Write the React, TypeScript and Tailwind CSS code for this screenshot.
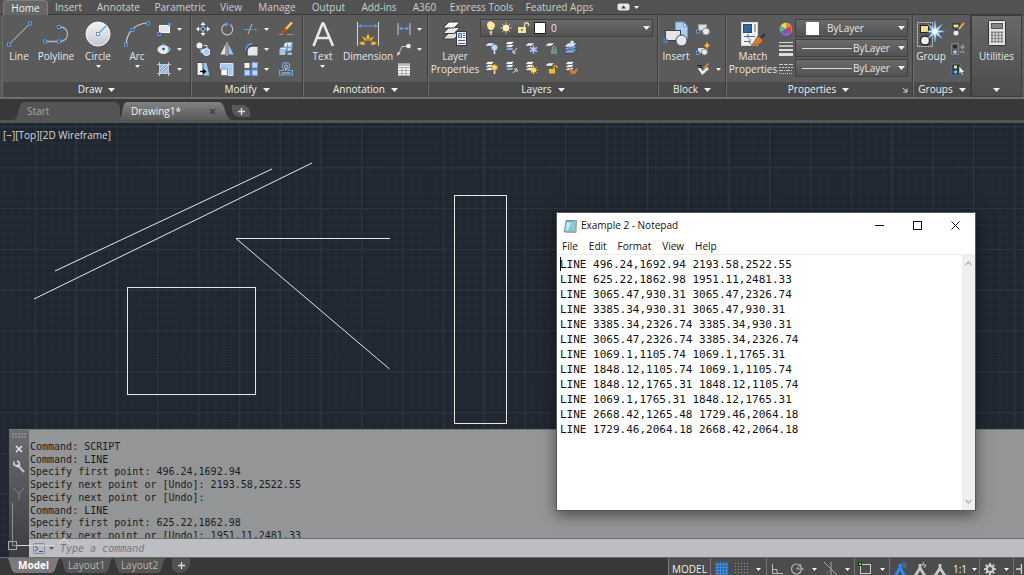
import React from 'react';

type IconProps = { w?: number; h?: number; children: React.ReactNode };

const Icon = ({ w = 14, h = 14, children }: IconProps) => (
  <svg width={w} height={h} viewBox={`0 0 ${w} ${h}`} fill="none" aria-hidden="true" className="block shrink-0">
    {children}
  </svg>
);

const Caret = () => (
  <Icon w={7} h={4}>
    <path d="M0 0h7L3.5 4z" fill="#f0f0f0" />
  </Icon>
);

const SmallCaret = () => (
  <Icon w={5} h={3}>
    <path d="M0 0h5L2.5 3z" fill="#f0f0f0" />
  </Icon>
);

const Grip = ({ x, y }: { x: number; y: number }) => (
  <rect x={x - 1.5} y={y - 1.5} width="3" height="3" fill="#3d4a5c" stroke="#5b9bf5" />
);

// stack of sheets used by every layer command
const Sheets = ({ blue = false }: { blue?: boolean }) => (
  <>
    <path d="M4 7.5h6.500l-3 3H1z" fill={blue ? '#7fb0ee' : '#e8e8e8'} stroke="#333" strokeWidth=".5" />
    <path d="M4 4.500h6.500l-3 3H1z" fill="#e8e8e8" stroke="#333" strokeWidth=".5" />
    <path d="M4 1.500h6.500l-3 3H1z" fill="#fff" stroke="#333" strokeWidth=".5" />
  </>
);

const Sheet = () => <path d="M4 3h6.500l-3 3H1z" fill="#f2f2f2" stroke="#444" strokeWidth=".5" />;

/* ---------- big icons ---------- */

const LineIcon = () => (
  <Icon w={26} h={26}>
    <path d="M3 23.500 24 2.500" stroke="#c9c9c9" />
    <Grip x={3} y={23.5} />
    <Grip x={24} y={2.5} />
  </Icon>
);

const PolylineIcon = () => (
  <Icon w={28} h={26}>
    <path d="M3 20.500h15c10 0 10-14.500 0-14.500" stroke="#b5b5b5" strokeWidth="1.300" />
    <Grip x={3} y={20.5} />
    <Grip x={17} y={20.5} />
    <Grip x={17} y={6} />
  </Icon>
);

const CircleIcon = () => (
  <Icon w={26} h={26}>
    <circle cx="13" cy="13" r="12" fill="url(#disc)" stroke="#f5f5f5" />
    <path d="m13 13 8-8" stroke="#5b9bf5" strokeWidth="1.300" />
    <rect x="11.500" y="11.500" width="3" height="3" fill="#fff" stroke="#5b9bf5" />
    <defs>
      <linearGradient id="disc" x2="0" y2="1">
        <stop stopColor="#f4f4f6" />
        <stop offset="1" stopColor="#c3c6d0" />
      </linearGradient>
    </defs>
  </Icon>
);

const ArcIcon = () => (
  <Icon w={26} h={26}>
    <path d="M2 23.500C3 11 11 2.500 24 2" stroke="#c9c9c9" strokeWidth="1.200" />
    <Grip x={2} y={23.5} />
    <Grip x={8.500} y={9} />
    <Grip x={24} y={2.5} />
  </Icon>
);

const TextIcon = () => (
  <Icon w={24} h={26}>
    <path d="M2.500 25 11.500 2.500h1L22 25M6 17h12.500" stroke="#e9e9e9" strokeWidth="2.600" />
  </Icon>
);

const DimensionIcon = () => (
  <Icon w={24} h={26}>
    <path d="M1.500 1v24M22.500 1v24" stroke="#d5d5d5" />
    <path d="M3 5h18" stroke="#5b9bf5" />
    <path d="m2 5 3-2v4zM22 5l-3-2v4z" fill="#5b9bf5" />
    <path d="m12 13 1.500 3-1.500 4-1.500-4zM6 16l4 1.500v3zM18 16l-4 1.500v3zM3.500 22l4-1.500 1.500 3H5zM20.500 22l-4-1.500-1.500 3H19z" fill="#ffc52e" stroke="#e0a02b" strokeWidth=".5" />
  </Icon>
);

const LayerPropsIcon = () => (
  <Icon w={26} h={26}>
    <path d="M7 12h11l-6 6H1z" fill="#e0e0e0" stroke="#3c3c3c" />
    <path d="M7 6.500h11l-6 6H1z" fill="#ececec" stroke="#3c3c3c" />
    <path d="M7 1h11l-6 6H1z" fill="#fff" stroke="#3c3c3c" />
    <rect x="14.500" y="10.500" width="10" height="14" fill="#eceff3" stroke="#2f3640" />
    <rect x="16.500" y="12.500" width="3" height="4" fill="#9fc3f3" stroke="#4a7dbd" />
    <path d="M21 12.500h2M21 14.500h2M21 16.500h2M16 19.500h7M16 22.500h7" stroke="#5a6470" />
  </Icon>
);

const InsertIcon = () => (
  <Icon w={26} h={26}>
    <path d="M12.500 1h8l4 4.500V18h-12z" fill="#a9cdf5" stroke="#7399c4" />
    <path d="M20.500 1v4.500h4z" fill="#e4f0ff" stroke="#7399c4" />
    <rect x="2.500" y="9.500" width="15" height="10" fill="#e5e6ea" stroke="#3c4048" />
    <circle cx="18.500" cy="19.500" r="5.500" fill="#e5e7ec" stroke="#3c4048" />
    <Grip x={2.500} y={19.5} />
  </Icon>
);

const MatchIcon = () => (
  <Icon w={26} h={26}>
    <rect x="1.500" y="1.500" width="16" height="23" fill="#f0f1f3" stroke="#d8d8d8" />
    <rect x="3.500" y="3.500" width="8" height="8" fill="#34679b" stroke="#234f7c" />
    <path d="M14 4h2M14 6h2M14 8h2M14 10h2M4 15.500h11M8 13v4.500M4 20.500h6M10 18v5" stroke="#5c6670" />
    <path d="m25 13-4 4" stroke="#3c2a20" strokeWidth="2.200" />
    <path d="m18 15 5 4c-1 4-5 6-12 5 4-2 4-6 7-9z" fill="#cf7f35" stroke="#7b3f12" strokeWidth=".7" />
  </Icon>
);

const GroupIcon = () => (
  <Icon w={28} h={28}>
    <rect x=".5" y="2.500" width="15" height="24" stroke="#d0d0d0" strokeDasharray="2 1" />
    <rect x="3.500" y="5.500" width="8" height="7" fill="#f0df86" stroke="#262626" />
    <circle cx="8" cy="20.500" r="4.500" fill="#e9f2fb" stroke="#262626" strokeWidth="1.300" />
    <path d="m18 1 1.300 7.500L25 4.500l-4 5.700 6.500 1.300-6.500 1.300 4 5.700-5.700-4L18 22l-1.300-7.500-5.700 4 4-5.700-6.500-1.300 6.500-1.300-4-5.700 5.700 4z" fill="#c5e4ff" stroke="#6fb3f3" strokeWidth=".5" />
    <circle cx="18" cy="11.500" r="2.500" fill="#fff" />
  </Icon>
);

const CalculatorIcon = () => (
  <Icon w={18} h={26}>
    <rect x=".5" y=".5" width="17" height="25" rx="1" fill="#e3e3e3" stroke="#333" />
    <rect x="3.500" y="3.500" width="11" height="5" fill="#7f858c" stroke="#555" />
    <path d="M3 12.500h12M3 15.500h12M3 18.500h12M3 21.500h12" stroke="#666" strokeWidth="2" strokeDasharray="2.200 1" />
  </Icon>
);

/* ---------- small icons ---------- */

const RectIcon = () => (
  <Icon>
    <rect x="2.500" y="3.500" width="10" height="7" fill="#e5e6ea" stroke="#f7f7f7" />
    <Grip x={1.800} y={12} />
    <circle cx="12.500" cy="2.500" r="1.700" fill="#5b9bf5" />
  </Icon>
);
const EllipseIcon = () => (
  <Icon>
    <ellipse cx="6.500" cy="7.500" rx="5.500" ry="4" fill="#dfe6f0" stroke="#f4f4f4" />
    <circle cx="6.500" cy="7" r="1.200" fill="#27394f" />
    <circle cx="6.500" cy="2.500" r="1.300" fill="#5b9bf5" />
    <circle cx="12.500" cy="7" r="1.500" fill="#5b9bf5" />
  </Icon>
);
const HatchIcon = () => (
  <Icon>
    <rect x="2.500" y="2.500" width="9" height="9" fill="#8fb0e4" />
    <path d="m3 7 4-4M3 11l8-8M7 11l4-4" stroke="#cfe0fa" />
    <path d="M0 2.500h14M0 11.500h14M2.500 0v14M11.500 0v14" stroke="#cacaca" />
  </Icon>
);
const MoveIcon = () => (
  <Icon>
    <path d="M7 0 4.500 3h5zM7 14l-2.500-3h5zM0 7l3-2.500v5zM14 7l-3-2.500v5z" fill="#f2f2f2" />
    <path d="M7 3v8M3 7h8" stroke="#d5d5d5" />
    <Grip x={7} y={7} />
  </Icon>
);
const RotateIcon = () => (
  <Icon>
    <path d="M5 2.300a5.500 5.500 0 1 0 5 .3" stroke="#c0c0c0" strokeWidth="1.200" />
    <path d="m5 0 4 2-4 3z" fill="#5b9bf5" />
  </Icon>
);
const TrimIcon = () => (
  <Icon>
    <path d="M0 7.500h5" stroke="#5b9bf5" />
    <path d="M7 7.500h7" stroke="#5b9bf5" strokeDasharray="2 1" />
    <path d="M8 2 4 12" stroke="#bbb" />
  </Icon>
);
const EraseIcon = () => (
  <Icon>
    <path d="M13 .500 6 8" stroke="#f7c75d" strokeWidth="2.500" />
    <path d="M7 6.500c-3 .5-5 2-5.500 5.500 3.500 0 5.500-1 6.500-3.500z" fill="#c3451f" />
    <path d="M0 12.500h4M8 12.500h6" stroke="#9a9a9a" />
  </Icon>
);
const CopyIcon = () => (
  <Icon>
    <circle cx="3.500" cy="3.500" r="3" fill="#efefef" />
    <circle cx="6.500" cy="9" r="2.200" fill="#b7d3f8" />
    <circle cx="10.500" cy="10" r="3.500" fill="#a9c9f5" stroke="#e5effd" />
    <path d="M8 3.500h3v3" stroke="#ddd" />
  </Icon>
);
const MirrorIcon = () => (
  <Icon>
    <path d="M5.500 2v10.500H.5z" fill="#e3e3e3" />
    <path d="M8.500 2v10.500h5z" fill="#9cc3f4" />
    <path d="M7 0v14" stroke="#c7d8ee" />
  </Icon>
);
const FilletIcon = () => (
  <Icon>
    <path d="M3 13.500V10c0-4 3-6 6-6h4.500v9.500z" fill="#e6e6e9" />
    <path d="M1.500 8.500c.5-4 3-6.500 7-7" stroke="#5b9bf5" strokeWidth="1.300" />
    <path d="M3 14V10c0-4 3-6 6-6h5" stroke="#222" />
  </Icon>
);
const ExplodeIcon = () => (
  <Icon>
    <path d="M4.500 3 7 .500h6.500L12 3z" fill="#e9f3fe" />
    <path d="M12 3 13.500.500v6L12 9z" fill="#7fa9dc" />
    <path d="M5 3h7v6H5z" fill="#b5d2f4" />
    <path d="M.5 7.500 2 5.500h5.500L6 7.500z" fill="#e9f3fe" />
    <path d="M.5 7.500H6v5.500H.5z" fill="#a5c7ef" />
    <path d="m6 7.500 1.500-2v5L6 13z" fill="#6d97cc" />
    <path d="M8.500 10.500h4.500V13H8.500z" fill="#9cc0ea" />
    <path d="M8.500 1v8M5 5.500h7" stroke="#54789f" strokeWidth=".6" />
  </Icon>
);
const StretchIcon = () => (
  <Icon>
    <path d="M1 .500h6v13H1z" fill="#f4f4f4" stroke="#444" />
    <path d="M7.500 1h3l3 12.500h-6z" fill="#9cc3f4" />
    <path d="M4 9.500h4" stroke="#111" strokeWidth="1.300" />
    <path d="m7 6.500 3.500 3-3.500 3z" fill="#111" />
  </Icon>
);
const ScaleIcon = () => (
  <Icon>
    <path d="M.5 1.500h12.500v12H8V7H.5z" fill="#a9c9f5" stroke="#d7e5f8" />
    <rect x="1" y="7" width="6.500" height="6.500" fill="#f4f4f4" stroke="#555" strokeWidth=".6" />
  </Icon>
);
const ArrayIcon = () => (
  <Icon>
    <rect x=".5" y="1" width="5" height="5" fill="#f4f4f4" />
    <rect x="8" y=".5" width="5.500" height="5.500" fill="#bcd6f9" stroke="#5b9bf5" />
    <rect x=".5" y="8" width="5.500" height="5.500" fill="#bcd6f9" stroke="#5b9bf5" />
    <rect x="8" y="8" width="5.500" height="5.500" fill="#bcd6f9" stroke="#5b9bf5" />
  </Icon>
);
const OffsetIcon = () => (
  <Icon>
    <path d="M.5 13V8.500H4.500V7C2 3.500 4 .700 7 .700S12 3.500 9.500 7v1.500h4V13z" stroke="#6fa3f0" strokeWidth="1.200" />
    <path d="M2.500 11h9M6.500 8.500V6.500C5 5 5.500 3 7 3s2 2 .8 3.500v2" stroke="#c9d3e2" />
  </Icon>
);
const LinearDimIcon = () => (
  <Icon>
    <path d="M1 1v12M13 1v12" stroke="#ccc" />
    <path d="M2 6.500h10" stroke="#5b9bf5" />
    <path d="m2 6.500 3-2v4zM12 6.500l-3-2v4z" fill="#5b9bf5" />
  </Icon>
);
const LeaderIcon = () => (
  <Icon>
    <path d="M1.500 12 5 4.500h5" stroke="#ccc" />
    <path d="m0 14 .5-4 3 1.500z" fill="#ddd" />
    <circle cx="11.500" cy="4" r="2.300" fill="#eee" />
  </Icon>
);
const TableIcon = () => (
  <Icon>
    <rect x="1" y="1.500" width="12" height="12" fill="#f6f6f6" />
    <path d="M1 3h12" stroke="#bdbdbd" strokeWidth="2" />
    <path d="M1 5.500h12M1 8.500h12M1 11.500h12M5 5v8M9 5v8" stroke="#9a9a9a" strokeWidth=".8" />
  </Icon>
);
const LayerOffIcon = () => (
  <Icon>
    <Sheet />
    <circle cx="10.500" cy="7.500" r="3" fill="#b9dcff" stroke="#6ba5e8" strokeWidth=".6" />
    <path d="M10.500 10.500V14" stroke="#eee" strokeWidth="1.500" />
  </Icon>
);
const LayerIsolateIcon = () => (
  <Icon>
    <Sheets blue />
    <path d="m13 8-4 5M9 10v3h3" stroke="#ddd" />
  </Icon>
);
const LayerFreezeIcon = () => (
  <Icon>
    <Sheet />
    <path d="M9.500 5.500v8M6 7.500l7 4M13 7.500l-7 4" stroke="#a9cdfb" strokeWidth="1.500" />
  </Icon>
);
const LayerLockIcon = () => (
  <Icon>
    <Sheet />
    <rect x="7" y="9" width="6" height="5" fill="#6e9088" />
    <path d="M8.500 9V7q1.500-2 3 0v2" stroke="#8fb0a8" />
  </Icon>
);
const LayerCurrentIcon = () => (
  <Icon>
    <path d="M4 9h9l-4 4H0zM4 6h9l-4 4H0z" fill="#7fb0ee" stroke="#333" strokeWidth=".5" />
    <path d="M4 3h9L9 7H0z" fill="#dbe9fa" stroke="#333" strokeWidth=".5" />
    <circle cx="8" cy="2.500" r="2" fill="#c7d6e8" />
  </Icon>
);
const LayerOnIcon = () => (
  <Icon>
    <Sheets />
    <circle cx="10.500" cy="7.500" r="2.800" fill="#ffd877" stroke="#e58b1c" />
    <path d="M10.500 10.500V14" stroke="#eee" strokeWidth="1.500" />
  </Icon>
);
const LayerUnisolateIcon = () => (
  <Icon>
    <Sheets blue />
    <path d="m9 13 4-4M10 9h3v3" stroke="#ddd" />
  </Icon>
);
const LayerThawIcon = () => (
  <Icon>
    <Sheets />
    <circle cx="9.500" cy="10" r="2.500" fill="#ffe25a" />
    <path d="M9.500 6v8M5.500 10h8M7 7.200l5.500 5.600M12.500 7.200 7 12.800" stroke="#ffd633" />
  </Icon>
);
const LayerUnlockIcon = () => (
  <Icon>
    <Sheet />
    <rect x="5" y="9" width="6" height="4.500" fill="#f5b921" />
    <path d="M10 9V6.500q1.500-2 3 0V8" stroke="#f5b921" strokeWidth="1.200" />
  </Icon>
);
const LayerMatchIcon = () => (
  <Icon>
    <Sheets />
    <path d="m6 9 4 3 3.500-3.500L11 13l-3 1z" fill="#cf7f35" stroke="#cf7f35" strokeWidth="1.500" />
  </Icon>
);
const CreateBlockIcon = () => (
  <Icon>
    <rect x="2.500" y="2.500" width="8" height="6" fill="#dcdde2" stroke="#999" />
    <circle cx="10" cy="9.500" r="3.500" fill="#e9e9ee" stroke="#888" />
    <Grip x={2} y={9.5} />
  </Icon>
);
const EditBlockIcon = () => (
  <Icon>
    <path d="M2 6h6v5H2z" fill="#dcdde2" />
    <circle cx="8.500" cy="10" r="3" fill="#e9e9ee" stroke="#888" />
    <path d="m11 0 1 2.500 2 1-2 1-1 2.500-1-2.500-2-1 2-1z" fill="#ffc52e" stroke="#e58b1c" strokeWidth=".5" />
    <Grip x={1.800} y={11} />
  </Icon>
);
const AttributesIcon = () => (
  <Icon>
    <path d="m3 6 3.500 5L12 6" stroke="#eee" strokeWidth="2.600" />
    <path d="M1 3.500h5M3 5.500h3" stroke="#222" />
    <path d="m12.500 1.500-5 5.500" stroke="#f08c34" strokeWidth="1.500" />
  </Icon>
);
const ColorWheelIcon = () => (
  <Icon>
    <path d="M7 7V1a6 6 0 0 1 5.200 3z" fill="#e98a3c" />
    <path d="m7 7 5.200-3a6 6 0 0 1 0 6z" fill="#e2452f" />
    <path d="m7 7 5.200 3A6 6 0 0 1 7 13z" fill="#b03bc6" />
    <path d="M7 7v6a6 6 0 0 1-5.200-3z" fill="#4468dd" />
    <path d="M7 7 1.800 10a6 6 0 0 1 0-6z" fill="#4fbf6a" />
    <path d="M7 7 1.800 4A6 6 0 0 1 7 1z" fill="#e8dc5a" />
    <circle cx="7" cy="7" r="6" stroke="#ddd" strokeWidth=".4" />
  </Icon>
);
const LineweightIcon = () => (
  <Icon>
    <path d="M0 .500h14" stroke="#ddd" />
    <path d="M0 4h14" stroke="#ddd" strokeWidth="1.500" />
    <path d="M0 8h14" stroke="#ddd" strokeWidth="2" />
    <path d="M0 12.500h14" stroke="#ddd" strokeWidth="3" />
  </Icon>
);
const LinetypeIcon = () => (
  <Icon>
    <path d="M0 2.500h14" stroke="#ccc" strokeDasharray="4 1" />
    <path d="M0 5.500h14" stroke="#ccc" strokeDasharray="2 1" />
    <path d="M0 8.500h14" stroke="#ccc" strokeDasharray="4 1 1 1" />
    <path d="M0 11.500h14" stroke="#ccc" strokeDasharray="1 1" />
  </Icon>
);
const UngroupIcon = () => (
  <Icon>
    <rect x="2" y="2" width="6" height="4" fill="#f0df86" stroke="#222" />
    <circle cx="5" cy="11" r="2.500" fill="#dfefff" />
    <path d="m13 1-5 6" stroke="#f4c04b" strokeWidth="1.600" />
    <path d="M5 7v2" stroke="#222" />
  </Icon>
);
const GroupEditIcon = () => (
  <Icon>
    <rect x=".5" y="1.500" width="7" height="11" stroke="#aaa" strokeDasharray="1 1" />
    <rect x="2.500" y="3" width="3" height="3" fill="#222" />
    <circle cx="4" cy="10" r="1.800" fill="#a9cdfb" />
    <path d="M9 5h5M11.500 2.500v5M9 10h5" stroke="#aaa" />
  </Icon>
);
const GroupSelectIcon = () => (
  <Icon>
    <rect x="1" y="2" width="8" height="11" fill="#2c3542" stroke="#4d8be0" strokeDasharray="1 1" />
    <rect x="3" y="3.500" width="3" height="3" fill="#f0df86" />
    <circle cx="4.500" cy="10" r="1.800" fill="#7fb0ee" />
    <path d="M8 4v8l2-1.500 1.500 3 1.200-.7L11.500 10H14z" fill="#f4e7c6" stroke="#333" strokeWidth=".5" />
  </Icon>
);

/* ---------- ribbon ---------- */

const ribbonTabs = [
  { name: 'Home', width: 'w-[45px]' },
  { name: 'Insert', width: 'w-[41px]' },
  { name: 'Annotate', width: 'w-[59px]' },
  { name: 'Parametric', width: 'w-[64px]' },
  { name: 'View', width: 'w-[38px]' },
  { name: 'Manage', width: 'w-[54px]' },
  { name: 'Output', width: 'w-[49px]' },
  { name: 'Add-ins', width: 'w-[52px]' },
  { name: 'A360', width: 'w-[39px]' },
  { name: 'Express Tools', width: 'w-[75px]' },
  { name: 'Featured Apps', width: 'w-[81px]' },
];

const RibbonTabs = () => (
  <nav className="flex h-[15px] shrink-0 border-b border-[#3b3b3b] bg-[#525252] pl-[3px]">
    {ribbonTabs.map((tab, index) => (
      <button
        key={tab.name}
        className={`${tab.width} h-[15px] whitespace-nowrap leading-[13px] ${
          index === 0 ? 'rounded-t-sm border border-b-0 border-[#7d7d7d] bg-[#666] text-[#f0f0f0]' : 'text-[#cfcfcf]'
        }`}
      >
        {tab.name}
      </button>
    ))}
    <button aria-label="Minimize ribbon" className="ml-[17px] flex items-center gap-1">
      <Icon w={13} h={8}>
        <rect x=".5" y=".5" width="12" height="7" rx="2" fill="#e6e6e6" />
        <path d="M4 5.500h5L6.500 2.500z" fill="#444" />
      </Icon>
      <SmallCaret />
    </button>
  </nav>
);

type PanelProps = { title?: string; width: string; launcher?: boolean; children: React.ReactNode };

const Panel = ({ title, width, launcher, children }: PanelProps) => (
  <section className={`${width} flex shrink-0 flex-col border-l border-r border-l-[#6b6b6b] border-r-[#3d3d3d]`}>
    <div className="flex h-[67px] pl-[2px] pr-1">{children}</div>
    <button className="flex h-[15px] items-center justify-center gap-[6px] bg-[#4a4a4a] text-[#f0f0f0]">
      {launcher && <span className="ml-auto w-2" />}
      {title}
      <Caret />
      {launcher && (
        <span className="ml-auto pr-1">
          <Icon w={6} h={6}>
            <path d="M1 1l4 4M5 1.500V5H1.500" stroke="#ddd" />
          </Icon>
        </span>
      )}
    </button>
  </section>
);

type BigProps = { icon: React.ReactNode; label: string; width: string; menu?: boolean };

const BigButton = ({ icon, label, width, menu }: BigProps) => (
  <button className={`${width} flex h-full shrink-0 flex-col items-center pt-[6px] leading-[13px] text-[#e8e8e8]`}>
    <span className="mb-[3px] flex h-[26px] items-center">{icon}</span>
    <span>{label}</span>
    {menu && (
      <span className="mt-[2px]">
        <SmallCaret />
      </span>
    )}
  </button>
);

type Tool = { label: string; icon: React.ReactNode; menu?: boolean };

const ToolColumn = ({ tools }: { tools: Tool[] }) => (
  <div className="flex shrink-0 flex-col pt-1">
    {tools.map((tool) => (
      <button key={tool.label} aria-label={tool.label} className="flex h-5 items-center gap-[6px]">
        {tool.icon}
        {tool.menu && <SmallCaret />}
      </button>
    ))}
  </div>
);

const Combo = ({ label, value, pad, children }: { label: string; value: string; pad: string; children?: React.ReactNode }) => (
  <div className="relative h-[18px] w-full border border-[#404040] bg-linear-to-b from-[#6a6a6a] to-[#525252]">
    <select aria-label={label} className={`${pad} h-4 w-full appearance-none bg-transparent leading-4 text-[#e8e8e8] outline-none`}>
      <option>{value}</option>
    </select>
    <div className="pointer-events-none absolute inset-0 flex items-center pl-[6px] pr-[2px]">
      {children}
      <span className="ml-auto">
        <Caret />
      </span>
    </div>
  </div>
);

const layerTools: Tool[] = [
  { label: 'Off', icon: <LayerOffIcon /> },
  { label: 'Isolate', icon: <LayerIsolateIcon /> },
  { label: 'Freeze', icon: <LayerFreezeIcon /> },
  { label: 'Lock', icon: <LayerLockIcon /> },
  { label: 'Make current', icon: <LayerCurrentIcon /> },
  { label: 'Turn all on', icon: <LayerOnIcon /> },
  { label: 'Unisolate', icon: <LayerUnisolateIcon /> },
  { label: 'Thaw all', icon: <LayerThawIcon /> },
  { label: 'Unlock', icon: <LayerUnlockIcon /> },
  { label: 'Match layer', icon: <LayerMatchIcon /> },
];

const Ribbon = () => (
  <div className="flex h-[84px] shrink-0 border-b-2 border-[#6e6e6e] bg-[#5b5b5b] pl-[2px]">
    <Panel title="Draw" width="w-[189px]">
      <BigButton icon={<LineIcon />} label="Line" width="w-[28px]" />
      <BigButton icon={<PolylineIcon />} label="Polyline" width="w-[46px]" />
      <BigButton icon={<CircleIcon />} label="Circle" width="w-[38px]" menu />
      <BigButton icon={<ArcIcon />} label="Arc" width="w-[40px]" menu />
      <ToolColumn
        tools={[
          { label: 'Rectangle', icon: <RectIcon />, menu: true },
          { label: 'Ellipse', icon: <EllipseIcon />, menu: true },
          { label: 'Hatch', icon: <HatchIcon />, menu: true },
        ]}
      />
    </Panel>
    <Panel title="Modify" width="w-[112px]">
      <div className="flex gap-[10px] pl-[2px]">
        <ToolColumn
          tools={[
            { label: 'Move', icon: <MoveIcon /> },
            { label: 'Copy', icon: <CopyIcon /> },
            { label: 'Stretch', icon: <StretchIcon /> },
          ]}
        />
        <ToolColumn
          tools={[
            { label: 'Rotate', icon: <RotateIcon /> },
            { label: 'Mirror', icon: <MirrorIcon /> },
            { label: 'Scale', icon: <ScaleIcon /> },
          ]}
        />
        <ToolColumn
          tools={[
            { label: 'Trim', icon: <TrimIcon />, menu: true },
            { label: 'Fillet', icon: <FilletIcon />, menu: true },
            { label: 'Array', icon: <ArrayIcon />, menu: true },
          ]}
        />
        <ToolColumn
          tools={[
            { label: 'Erase', icon: <EraseIcon /> },
            { label: 'Explode', icon: <ExplodeIcon /> },
            { label: 'Offset', icon: <OffsetIcon /> },
          ]}
        />
      </div>
    </Panel>
    <Panel title="Annotation" width="w-[125px]">
      <BigButton icon={<TextIcon />} label="Text" width="w-[33px]" menu />
      <BigButton icon={<DimensionIcon />} label="Dimension" width="w-[58px]" />
      <ToolColumn
        tools={[
          { label: 'Linear', icon: <LinearDimIcon />, menu: true },
          { label: 'Leader', icon: <LeaderIcon />, menu: true },
          { label: 'Table', icon: <TableIcon /> },
        ]}
      />
    </Panel>
    <Panel title="Layers" width="w-[230px]">
      <BigButton icon={<LayerPropsIcon />} label="Layer Properties" width="w-[48px]" />
      <div className="ml-px flex flex-1 flex-col pt-[4px]">
        <Combo label="Layer" value="0" pad="pl-[70px]">
          <span className="flex items-center gap-[4px]">
            <Icon w={8} h={14}>
              <path d="M2.500 9C-3 3 2-.5 4 .500S11 3 5.500 9z" fill="#fbe9a0" />
              <path d="M2.500 11h3M3 13h2" stroke="#ddd" strokeWidth="1.500" />
            </Icon>
            <Icon w={14} h={14}>
              <path d="M7 1v12M1 7h12M3 3l8 8M11 3l-8 8" stroke="#d0cba8" strokeWidth=".8" />
              <circle cx="7" cy="7" r="3.200" fill="#fff0b0" />
            </Icon>
            <Icon w={13} h={14}>
              <rect x="1" y="6" width="8" height="6" fill="#f2e3a0" />
              <path d="M7.500 6V3q2-2.500 4 0v2" stroke="#eadb9b" strokeWidth="1.300" />
              <path d="M5 8v2" stroke="#333" />
            </Icon>
            <span className="size-3 border border-[#222] bg-white" />
          </span>
        </Combo>
        <div className="grid grid-cols-[repeat(5,20px)] pl-px">
          {layerTools.map((tool) => (
            <button key={tool.label} aria-label={tool.label} className="flex h-5 items-center justify-center">
              {tool.icon}
            </button>
          ))}
        </div>
      </div>
    </Panel>
    <Panel title="Block" width="w-[68px]">
      <BigButton icon={<InsertIcon />} label="Insert" width="w-[30px]" />
      <div className="ml-[5px]">
        <ToolColumn
          tools={[
            { label: 'Create', icon: <CreateBlockIcon /> },
            { label: 'Edit', icon: <EditBlockIcon /> },
            { label: 'Edit attributes', icon: <AttributesIcon />, menu: true },
          ]}
        />
      </div>
    </Panel>
    <Panel title="Properties" width="w-[187px]" launcher>
      <BigButton icon={<MatchIcon />} label="Match Properties" width="w-[48px]" />
      <div className="ml-[2px]">
        <ToolColumn
          tools={[
            { label: 'Color', icon: <ColorWheelIcon /> },
            { label: 'Lineweight', icon: <LineweightIcon /> },
            { label: 'Linetype', icon: <LinetypeIcon /> },
          ]}
        />
      </div>
      <div className="ml-[2px] flex flex-1 flex-col gap-[2px] pt-1">
        <Combo label="Object color" value="ByLayer" pad="pl-[31px]">
          <span className="ml-1 size-[13px] bg-white" />
        </Combo>
        <Combo label="Object lineweight" value="ByLayer" pad="pl-[57px]">
          <span className="h-px w-[50px] bg-[#d8d8d8]" />
        </Combo>
        <Combo label="Object linetype" value="ByLayer" pad="pl-[57px]">
          <span className="h-px w-[50px] bg-[#d8d8d8]" />
        </Combo>
      </div>
    </Panel>
    <Panel title="Groups" width="w-[58px]">
      <BigButton icon={<GroupIcon />} label="Group" width="w-[30px]" />
      <div className="ml-[5px]">
        <ToolColumn
          tools={[
            { label: 'Ungroup', icon: <UngroupIcon /> },
            { label: 'Group edit', icon: <GroupEditIcon /> },
            { label: 'Group selection', icon: <GroupSelectIcon /> },
          ]}
        />
      </div>
    </Panel>
    <button className="flex w-[51px] shrink-0 flex-col items-center border border-[#3d3d3d] bg-linear-to-b from-[#686868] to-[#4c4c4c] pt-1 leading-[13px] text-[#e8e8e8]">
      <CalculatorIcon />
      <span className="mt-1">Utilities</span>
      <span className="mt-auto pb-1">
        <Caret />
      </span>
    </button>
  </div>
);

/* ---------- file tabs ---------- */

const FileTabs = () => (
  <div className="flex h-[24px] shrink-0 items-end border-b-[3px] border-[#555] bg-[#383838] pl-[14px]">
    <button className="relative h-[18px] w-[106px] text-left text-[#a8a8a8]">
      <svg viewBox="0 0 106 18" className="absolute inset-0 size-full" aria-hidden="true">
        <path d="M0 18C5 16 4 0 10 0h90q4 0 6 5v13z" fill="#545454" />
      </svg>
      <span className="relative pl-[13px]">Start</span>
    </button>
    <button className="relative flex h-[18px] w-[112px] items-center justify-between pl-[11px] pr-[16px] text-[#f2f2f2]">
      <svg viewBox="0 0 112 18" className="absolute inset-0 size-full" aria-hidden="true">
        <defs>
          <linearGradient id="tab" x2="0" y2="1">
            <stop stopColor="#828282" />
            <stop offset="1" stopColor="#5a5a5a" />
          </linearGradient>
        </defs>
        <path d="M-2 18C4 16 1 0 7 0h92c7 0 5 16 13 18z" fill="url(#tab)" />
      </svg>
      <span className="relative">Drawing1*</span>
      <span className="relative">
        <Icon w={7} h={7}>
          <path d="m1 1 5 5M6 1 1 6" stroke="#3c3c3c" strokeWidth="1.300" />
        </Icon>
      </span>
    </button>
    <button aria-label="New drawing" className="mb-[3px] flex h-[12px] w-[18px] items-center justify-center rounded-tr-lg rounded-bl-lg bg-[#595959]">
      <Icon w={7} h={7}>
        <path d="M3.500 0v7M0 3.500h7" stroke="#e0e0e0" strokeWidth="1.400" />
      </Icon>
    </button>
  </div>
);

/* ---------- drawing area ---------- */

const Drawing = () => (
  <svg className="absolute inset-0 size-full" aria-hidden="true">
    <defs>
      <pattern id="minor" x="34.900" y="3.500" width="8.160" height="8.160" patternUnits="userSpaceOnUse">
        <path d="M.5 0v8.160M0 .500h8.160" stroke="#262d38" />
      </pattern>
      <pattern id="major" x="34.900" y="3.500" width="40.800" height="40.800" patternUnits="userSpaceOnUse">
        <path d="M.5 0v40.800M0 .500h40.800" stroke="#2d3645" />
      </pattern>
    </defs>
    <rect width="100%" height="100%" fill="url(#minor)" />
    <rect width="100%" height="100%" fill="url(#major)" />
    <g stroke="#e6e6e6" fill="none">
      <path d="M34 176 312 40M55 148l217-102" />
      <path d="M390 115.500H236L389.500 246" />
      <rect x="127.500" y="164.500" width="128" height="107" />
      <rect x="454.500" y="72.500" width="52" height="228" />
    </g>
  </svg>
);

const history = [
  'Command: SCRIPT',
  'Command: LINE',
  'Specify first point: 496.24,1692.94',
  'Specify next point or [Undo]: 2193.58,2522.55',
  'Specify next point or [Undo]:',
  'Command: LINE',
  'Specify first point: 625.22,1862.98',
  'Specify next point or [Undo]: 1951.11,2481.33',
];

const CommandWindow = () => (
  <div className="absolute bottom-0 left-[9px] right-0 flex h-[128px] border-t border-[#777] font-['DejaVu_Sans_Mono',monospace]">
    <div className="flex w-5 shrink-0 flex-col items-center gap-[7px] bg-linear-to-b from-[#6b6d70] to-[#3a3c40] pt-[3px]">
      <Icon w={15} h={5}>
        <path d="M0 1h15M0 4h15" stroke="#a5a7a9" strokeDasharray="2 1" />
      </Icon>
      <button aria-label="Close">
        <Icon w={8} h={8}>
          <path d="m1 1 6 6M7 1 1 7" stroke="#e3e3e3" strokeWidth="1.700" />
        </Icon>
      </button>
      <button aria-label="Customize">
        <Icon w={12} h={13}>
          <path d="m4 4.500 7 7.500" stroke="#b9c1cc" strokeWidth="2.400" />
          <path d="M1 1.500v3l3 2 2.500-1.500L6 2 4 1" stroke="#d5dae0" strokeWidth="1.500" />
        </Icon>
      </button>
    </div>
    <div className="flex min-w-0 flex-1 flex-col">
      <div className="flex h-[108px] flex-col overflow-hidden bg-[#9a9b9d]/95 pl-px pt-[11px] text-[#1c1c1c]">
        <div className="flex h-[101px] shrink-0 flex-col justify-between">
          {history.map((line, index) => (
            <p key={index} className="whitespace-pre leading-[12px]">{line}</p>
          ))}
        </div>
      </div>
      <div className="flex h-[19px] items-center border-t border-[#6c6d70] bg-[#c1c2c5]/98 pl-1">
        <button aria-label="Recent commands" className="flex items-center gap-1">
          <Icon w={12} h={11}>
            <rect x=".5" y=".5" width="11" height="10" rx="1" fill="#b3bdca" stroke="#7f8a99" />
            <path d="m2 3 3 2.500L2 8M6 8.500h4" stroke="#46505e" />
          </Icon>
          <Icon w={5} h={3}>
            <path d="M0 0h5L2.500 3z" fill="#555" />
          </Icon>
        </button>
        <input
          aria-label="Command"
          placeholder="Type a command"
          className="ml-[6px] h-4 min-w-0 flex-1 bg-transparent italic outline-none placeholder:text-[#77787b]"
        />
      </div>
    </div>
  </div>
);

// axis marker, drawn on top of the command window
const UcsMarker = () => (
  <svg width="64" height="76" viewBox="0 0 64 76" fill="none" className="pointer-events-none absolute bottom-0 left-[8px]" aria-hidden="true">
    <path d="M4.500 22v38" stroke="#8e9194" />
    <rect x=".5" y="60.500" width="8" height="8" stroke="#a8abae" />
    <path d="M8 64.500h39" stroke="#d5d6d8" />
    <path d="M4.500 60v4.500H9" stroke="#8e9194" />
    <path d="m51 63 5-6 5 6" stroke="#dcdddf" />
    <path d="m6 7 5 6 5-6M11 13v6" stroke="#85878a" />
  </svg>
);

const scriptText = `LINE 496.24,1692.94 2193.58,2522.55
LINE 625.22,1862.98 1951.11,2481.33
LINE 3065.47,930.31 3065.47,2326.74
LINE 3385.34,930.31 3065.47,930.31
LINE 3385.34,2326.74 3385.34,930.31
LINE 3065.47,2326.74 3385.34,2326.74
LINE 1069.1,1105.74 1069.1,1765.31
LINE 1848.12,1105.74 1069.1,1105.74
LINE 1848.12,1765.31 1848.12,1105.74
LINE 1069.1,1765.31 1848.12,1765.31
LINE 2668.42,1265.48 1729.46,2064.18
LINE 1729.46,2064.18 2668.42,2064.18`;

const Notepad = () => (
  <div className="absolute left-[556px] top-[89px] flex h-[299px] w-[420px] flex-col border border-[#55585c] bg-white text-[#111] shadow-[0_4px_14px_rgba(0,0,0,0.5)]">
    <div className="flex h-[25px] shrink-0 items-center pl-[6px] pr-[15px]">
      <Icon w={14} h={14}>
        <path d="M3 1.500h10.500L12 13H1z" fill="#8cc9d6" stroke="#6a8f98" strokeWidth=".7" />
        <path d="m13.500 1.500-.5 12-10 .5" stroke="#b99b62" />
        <path d="M4 1v1.500M6 1v1.500M8 1v1.500M10 1v1.500" stroke="#555" strokeWidth=".7" />
        <path d="M4 3.500h4L5 11H3z" fill="#c5eaf2" />
      </Icon>
      <h1 className="ml-[4px]">Example 2 - Notepad</h1>
      <div className="ml-auto flex items-center gap-[29px]">
        <button aria-label="Minimize">
          <Icon w={9} h={9}>
            <path d="M0 4.500h9" stroke="#111" />
          </Icon>
        </button>
        <button aria-label="Maximize">
          <Icon w={9} h={9}>
            <rect x=".5" y=".5" width="8" height="8" stroke="#111" />
          </Icon>
        </button>
        <button aria-label="Close Notepad">
          <Icon w={9} h={9}>
            <path d="m.5.500 8 8M8.500.500l-8 8" stroke="#111" />
          </Icon>
        </button>
      </div>
    </div>
    <div className="flex h-[17px] shrink-0 items-center gap-[11px] border-b border-[#eee] pl-[5px]">
      {['File', 'Edit', 'Format', 'View', 'Help'].map((item) => (
        <button key={item}>{item}</button>
      ))}
    </div>
    <div className="relative flex min-h-0 flex-1">
      <textarea
        aria-label="Document text"
        readOnly
        wrap="off"
        value={scriptText}
        className="min-w-0 flex-1 resize-none overflow-hidden pl-[3px] pt-[2px] font-['DejaVu_Sans_Mono',monospace] text-[11px] leading-[15px] outline-none"
      />
      <span className="absolute left-[3px] top-[2px] h-[14px] w-px bg-black" />
      <div className="flex w-[13px] shrink-0 flex-col items-center justify-between bg-[#efefef] py-[6px]">
        <Icon w={7} h={5}>
          <path d="m.5 4 3-3 3 3" stroke="#b5b5b5" strokeWidth="1.500" />
        </Icon>
        <Icon w={7} h={5}>
          <path d="m.5 1 3 3 3-3" stroke="#b5b5b5" strokeWidth="1.500" />
        </Icon>
      </div>
    </div>
  </div>
);

/* ---------- status bar ---------- */

const sheetTabs = ['Model', 'Layout1', 'Layout2'];

const SheetTabs = () => (
  <div className="flex items-start pl-[7px]">
    {sheetTabs.map((name, index) => (
      <button key={name} className={`relative h-[15px] w-[53px] leading-[15px] ${index === 0 ? 'font-bold text-white' : 'text-[#b5b5b5]'}`}>
        <svg viewBox="0 0 53 15" className="absolute inset-0 size-full" aria-hidden="true">
          <path d="M0 0c4 2 3 15 9 15h35c6 0 5-13 9-15z" fill={index === 0 ? '#7a7a7a' : '#565656'} />
        </svg>
        <span className="relative">{name}</span>
      </button>
    ))}
    <button aria-label="New layout" className="ml-[6px] flex h-[15px] w-[18px] items-center justify-center rounded-br-xl rounded-bl-lg bg-[#525252]">
      <Icon w={7} h={7}>
        <path d="M3.500 0v7M0 3.500h7" stroke="#ddd" strokeWidth="1.300" />
      </Icon>
    </button>
  </div>
);

const Cell = ({ label, width = 'w-5', children }: { label: string; width?: string; children: React.ReactNode }) => (
  <button aria-label={label} className={`${width} flex shrink-0 items-center justify-center`}>{children}</button>
);

const Scaler = ({ color, extra }: { color: string; extra?: string }) => (
  <Icon>
    <path d="M7 2v5M7 6l-5 8M7 6l5 8" stroke={color} strokeWidth="2.800" />
    {extra && <path d={extra} stroke={color} />}
  </Icon>
);

const StatusBar = () => (
  <div className="flex h-[18px] shrink-0 overflow-hidden border-t border-[#6a6a6a] bg-[#383838]">
    <SheetTabs />
    <div className="ml-auto flex h-[22px] divide-x divide-[#757575] border-l border-[#757575] bg-[#4c4c4c]">
      <button className="w-[42px] text-[#f0f0f0]">MODEL</button>
      <div className="flex">
        <Cell label="Grid">
          <Icon w={13}>
            <path d="M2.500 0v14M5.500 0v14M8.500 0v14M11.500 0v14M0 2.500h13M0 5.500h13M0 8.500h13M0 11.500h13" stroke="#2f8df5" strokeWidth="1.300" />
          </Icon>
        </Cell>
        <Cell label="Snap">
          <Icon w={13}>
            <path d="M0 1.500h13M0 4.500h13M0 7.500h13M0 10.500h13" stroke="#999" strokeDasharray="1 2" />
          </Icon>
        </Cell>
        <Cell label="Snap options" width="w-[15px]"><SmallCaret /></Cell>
      </div>
      <div className="flex">
        <Cell label="Ortho">
          <Icon>
            <path d="M2.500 2v9.500H13M3 7.500h4V11" stroke="#bbb" />
          </Icon>
        </Cell>
        <Cell label="Polar">
          <Icon>
            <circle cx="6.500" cy="7" r="5" stroke="#b5b5b5" strokeWidth="1.200" />
            <path d="M6.500 7H14M6.500 7 11 2" stroke="#b5b5b5" />
          </Icon>
        </Cell>
        <Cell label="Polar options" width="w-[14px]"><SmallCaret /></Cell>
        <Cell label="Isometric">
          <Icon>
            <path d="m0 0 13 13M7 0v13" stroke="#aaa" />
            <path d="M7 7 2 12" stroke="#777" />
          </Icon>
        </Cell>
        <Cell label="Isometric options" width="w-[13px]"><SmallCaret /></Cell>
      </div>
      <div className="flex">
        <Cell label="Object snap">
          <Icon>
            <rect x="2.500" y="2.500" width="10" height="9" stroke="#ccc" />
            <rect x=".5" y=".5" width="3" height="3" fill="#1bff1b" stroke="#073b07" />
          </Icon>
        </Cell>
        <Cell label="Object snap options" width="w-[14px]"><SmallCaret /></Cell>
      </div>
      <div className="flex text-[#f0f0f0]">
        <Cell label="Annotation visibility"><Scaler color="#2f8df5" extra="M9 3a2 2 0 1 0 4 0 2 2 0 1 0-4 0" /></Cell>
        <Cell label="Auto scale"><Scaler color="#c8c8c8" extra="m11 0-2 3h4l-2 3" /></Cell>
        <Cell label="Annotation scale"><Scaler color="#c8c8c8" /></Cell>
        <button className="w-5">1:1</button>
        <Cell label="Scale list" width="w-[9px]"><SmallCaret /></Cell>
      </div>
      <div className="flex">
        <Cell label="Workspace">
          <Icon w={12} h={12}>
            <circle cx="6" cy="6" r="3.200" stroke="#c8c8c8" strokeWidth="2.400" />
            <path d="M6 0v2M6 10v2M0 6h2M10 6h2M1.800 1.800l1.400 1.400M8.800 8.800l1.400 1.400M10.200 1.800 8.800 3.200M3.200 8.800l-1.400 1.400" stroke="#c8c8c8" strokeWidth="2" />
          </Icon>
        </Cell>
        <Cell label="Workspace options" width="w-[13px]"><SmallCaret /></Cell>
      </div>
      <Cell label="Monitor" width="w-[10px]">
        <Icon w={6} h={12}>
          <path d="M0 6h6M5.500 1v10" stroke="#d5d5d5" strokeWidth="1.400" />
        </Icon>
      </Cell>
    </div>
  </div>
);

export default function App() {
  return (
    <div className="flex h-screen flex-col overflow-hidden bg-[#383838] font-['Open_Sans','Noto_Sans',sans-serif] text-[10px]">
      <RibbonTabs />
      <Ribbon />
      <FileTabs />
      <main className="relative min-h-0 flex-1 bg-[#212730]">
        <Drawing />
        <p className="relative px-[3px] pt-[5px] leading-[14px] text-[#d8d8d8]">[−][Top][2D Wireframe]</p>
        <CommandWindow />
        <UcsMarker />
        <Notepad />
      </main>
      <StatusBar />
    </div>
  );
}
